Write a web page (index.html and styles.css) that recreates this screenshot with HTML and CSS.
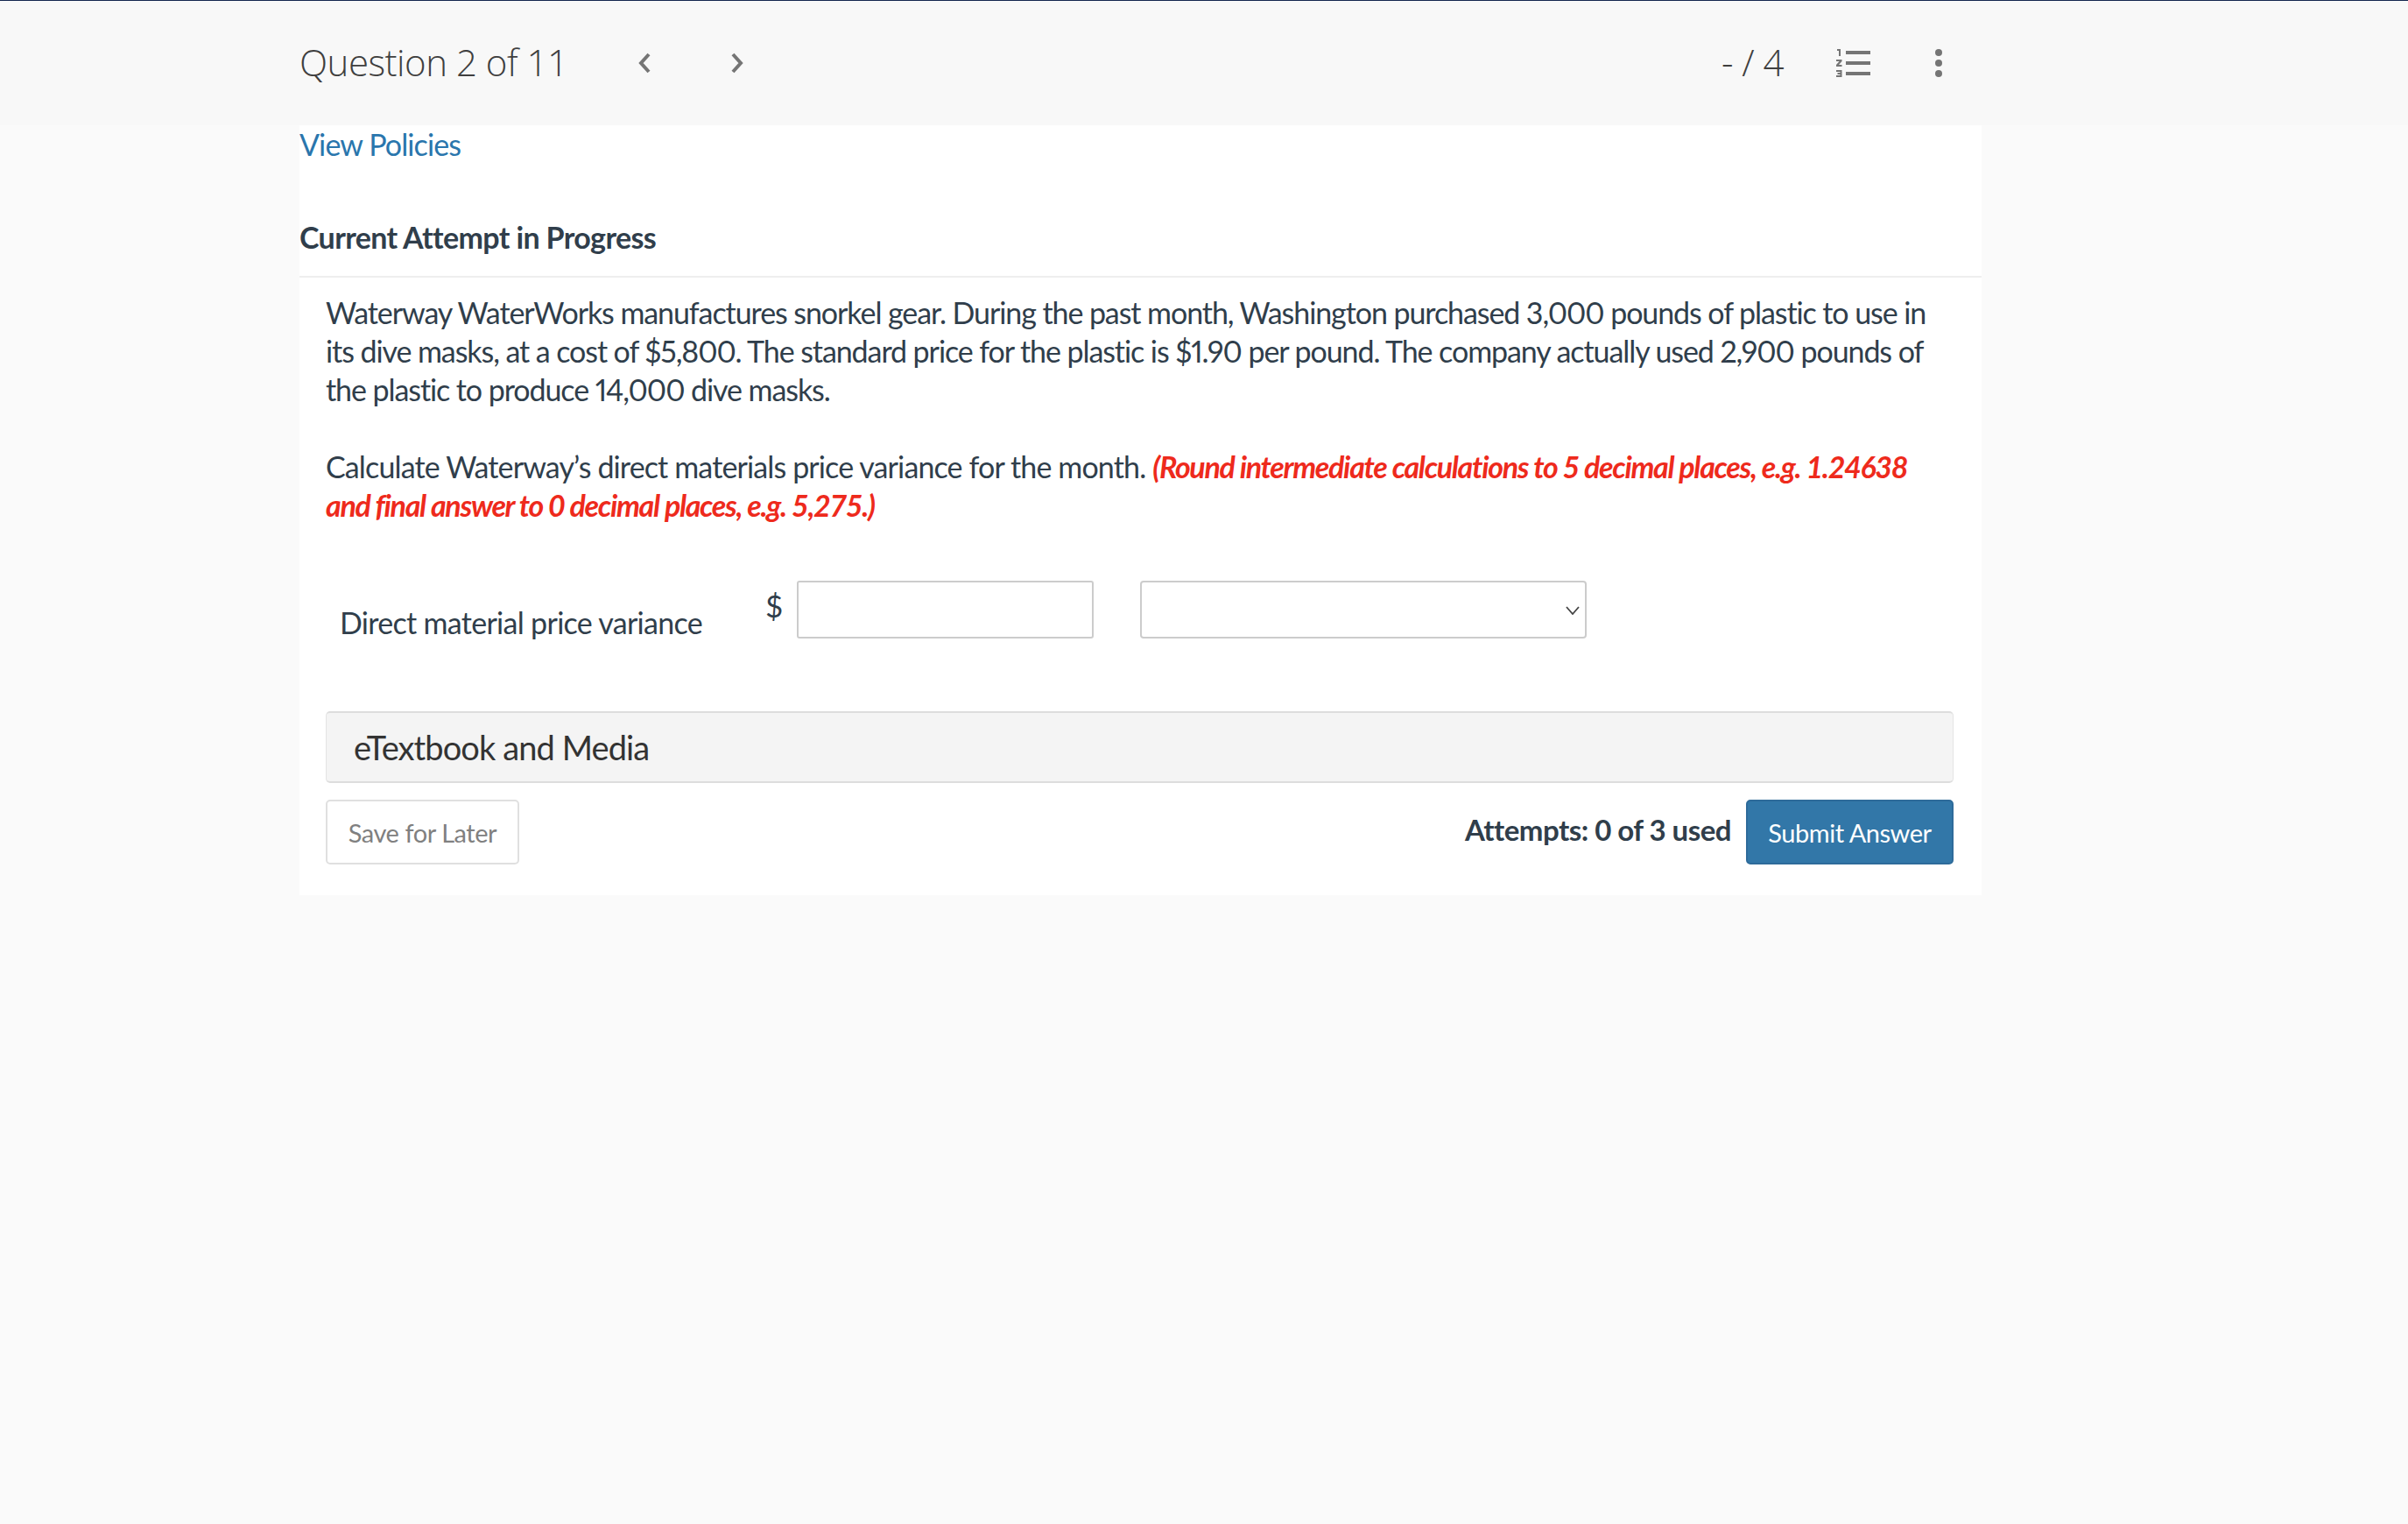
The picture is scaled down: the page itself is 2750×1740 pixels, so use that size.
FILE: index.html
```html
<html>

<head>
    <title>Question 2 of 11</title>
    <link rel="stylesheet" href="styles.css">
</head>

<body>
    <div class="top-bar">
        <div class="top-inner">
            <div class="question-nav">
                <span class="question-count">Question 2 of 11</span>
                <svg class="nav-arrow prev-arrow" viewBox="0 0 16 26"><path d="M13 3L4 13l9 10" /></svg>
                <svg class="nav-arrow next-arrow" viewBox="0 0 16 26"><path d="M3 3l9 10-9 10" /></svg>
            </div>
            <div class="question-tools">
                <span class="question-score">- / 4</span>
                <svg class="list-icon" viewBox="0 0 40 32">
                    <path d="M11 2h28v4H11zM11 14h28v4H11zM11 26h28v4H11z" />
                    <path d="M1 0h4v8H3V2H1zM0 12h6.5v2l-3.5 4h3.5v2H0v-2l3.5-4H0zM0 24h6.5v8H0v-2h4.5v-1H1.500v-2H4.500v-1H0z" />
                </svg>
                <svg class="more-icon" viewBox="0 0 8 32">
                    <circle cx="4" cy="4" r="4" />
                    <circle cx="4" cy="16" r="4" />
                    <circle cx="4" cy="28" r="4" />
                </svg>
            </div>
        </div>
    </div>

    <div class="panel">
        <a class="policies-link" href="#">View Policies</a>
        <h2 class="attempt-title">Current Attempt in Progress</h2>
        <div class="question-body">
            <p class="intro-text">Waterway WaterWorks manufactures snorkel gear. During the past month, Washington purchased 3,000 pounds of plastic to use in its dive masks, at a cost of $5,800. The standard price for the plastic is $1.90 per pound. The company actually used 2,900 pounds of the plastic to produce 14,000 dive masks.</p>
            <p>Calculate Waterway’s direct materials price variance for the month. <em class="round-note">(Round intermediate calculations to 5 decimal places, e.g. 1.24638 and final answer to 0 decimal places, e.g. 5,275.)</em></p>

            <div class="answer-row">
                <span class="answer-label">Direct material price variance</span>
                <span class="dollar">$</span>
                <input class="answer-input" type="text">
                <div class="select-wrap">
                    <select class="answer-select"></select>
                    <svg class="select-arrow" viewBox="0 0 16 10"><path d="M1 1l7 8 7-8" /></svg>
                </div>
            </div>

            <div class="media-bar">eTextbook and Media</div>

            <div class="action-row">
                <button class="save-button">Save for Later</button>
                <div class="submit-group">
                    <span class="attempts">Attempts: 0 of 3 used</span>
                    <button class="submit-button">Submit Answer</button>
                </div>
            </div>
        </div>
    </div>
</body>

</html>
```

FILE: styles.css
```css
html,
body {
    height: 100%;
    margin: 0;
}

body {
    font-family: 'Lato', sans-serif;
    background-color: #fafafa;
    color: #303e4b;
    overflow: hidden;
}

.top-bar {
    height: 142px;
    background-color: #f8f8f8;
    border-top: 1px solid #14264f;
}

.top-inner {
    width: 1921px;
    height: 100%;
    margin-left: 342px;
    display: flex;
    justify-content: space-between;
    align-items: center;
}

.question-nav,
.question-tools {
    display: flex;
    align-items: center;
}

.question-count {
    font-family: 'Open Sans', sans-serif;
    font-weight: 300;
    font-size: 42px;
    letter-spacing: -0.5px;
    color: #3f3f3f;
    width: 386px;
    margin-top: -3px;
}

.question-score {
    font-family: 'Open Sans', sans-serif;
    font-weight: 300;
    font-size: 42px;
    letter-spacing: -0.5px;
    color: #3f3f3f;
    margin-right: 60px;
    margin-top: -3px;
}

.nav-arrow {
    width: 16px;
    height: 26px;
}

.nav-arrow path {
    fill: none;
    stroke: #757575;
    stroke-width: 4;
}

.prev-arrow {
    margin-right: 90px;
}

.list-icon {
    width: 40px;
    height: 32px;
    margin-right: 73px;
    fill: #757575;
}

.more-icon {
    width: 8px;
    height: 32px;
    margin-right: 45px;
    fill: #757575;
}

.panel {
    width: 1921px;
    height: 879px;
    margin-left: 342px;
    background-color: #ffffff;
}

.policies-link {
    display: block;
    font-size: 34px;
    line-height: 44px;
    letter-spacing: -0.9px;
    color: #2a76ad;
    text-decoration: none;
}

.attempt-title {
    margin: 62px 0 0 0;
    font-size: 34px;
    line-height: 44px;
    font-weight: 700;
    letter-spacing: -0.63px;
    padding-bottom: 22px;
    border-bottom: 2px solid #eeeeee;
}

.question-body {
    padding: 18px 32px 0 30px;
    font-size: 34px;
    line-height: 44px;
    letter-spacing: -0.87px;
}

.question-body p {
    margin: 0 0 44px 0;
}

.question-body .intro-text {
    letter-spacing: -1.08px;
    font-variant-numeric: proportional-nums;
}

.round-note {
    color: #ee2a1c;
    font-weight: 700;
    letter-spacing: -1.32px;
}

.answer-row {
    display: flex;
    align-items: flex-start;
    margin-top: 64px;
    height: 149px;
}

.answer-label {
    width: 487px;
    margin: 26px 0 0 16px;
    letter-spacing: -0.7px;
}

.dollar {
    width: 36px;
    margin: -2px 0 0 -1px;
    line-height: 60px;
    font-size: 35px;
}

.answer-input {
    width: 339px;
    height: 66px;
    box-sizing: border-box;
    border: 2px solid #cccccc;
    border-radius: 3px;
    background-color: #ffffff;
    margin-right: 53px;
    padding: 0;
}

.select-wrap {
    position: relative;
    width: 510px;
    height: 66px;
}

.answer-select {
    width: 100%;
    height: 100%;
    box-sizing: border-box;
    appearance: none;
    border: 2px solid #cccccc;
    border-radius: 4px;
    background-color: #ffffff;
}

.select-arrow {
    position: absolute;
    top: 29px;
    right: 8px;
    width: 16px;
    height: 10px;
}

.select-arrow path {
    fill: none;
    stroke: #444444;
    stroke-width: 1.8;
}

.media-bar {
    height: 82px;
    box-sizing: border-box;
    padding-left: 31px;
    border: 1px solid #e4e4e4;
    border-top: 2px solid #dddddd;
    border-bottom: 2px solid #dddddd;
    border-radius: 5px;
    background-color: #f4f4f4;
    font-size: 38px;
    line-height: 78px;
    letter-spacing: -0.9px;
    color: #333333;
}

.action-row {
    display: flex;
    justify-content: space-between;
    margin-top: 19px;
}

.submit-group {
    display: flex;
    align-items: flex-start;
}

.save-button,
.submit-button {
    height: 74px;
    box-sizing: border-box;
    border-radius: 5px;
    font-family: 'Lato', sans-serif;
    font-size: 29px;
    letter-spacing: -0.45px;
    padding: 0;
}

.save-button {
    width: 221px;
    border: 2px solid #e0e0e0;
    background-color: #ffffff;
    color: #808080;
}

.submit-button {
    width: 237px;
    border: 2px solid #2e6b9a;
    background-color: #3277a8;
    color: #ffffff;
}

.attempts {
    font-weight: 700;
    font-size: 33px;
    line-height: 44px;
    letter-spacing: -0.52px;
    margin: 12px 17px 0 0;
}
```
